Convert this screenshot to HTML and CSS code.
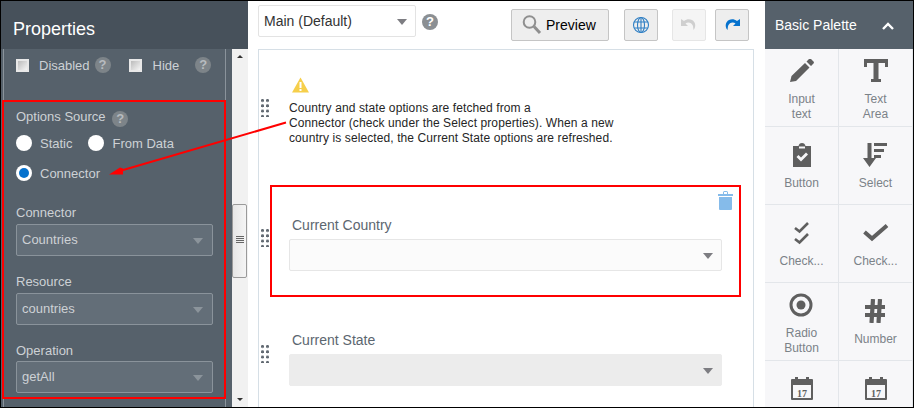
FILE: index.html
```html
<!DOCTYPE html>
<html lang="en">
<head>
<meta charset="utf-8">
<title>Properties</title>
<link rel="stylesheet" href="styles.css">
</head>
<body>
<div class="frame">
  <aside class="props">
    <header class="props-head">Properties</header>
    <div class="props-body">
      <div class="props-form">
        <div class="check-row">
          <span class="checkbox"></span><span class="check-label">Disabled</span><span class="help h-disabled">?</span>
          <span class="checkbox c-hide"></span><span class="check-label">Hide</span><span class="help h-hide">?</span>
        </div>
        <div class="source">
          <div class="field-label with-help">Options Source <span class="help">?</span></div>
          <div class="radio-row"><span class="radio"></span><span class="radio-label">Static</span><span class="radio r2"></span><span class="radio-label">From Data</span></div>
          <div class="radio-row"><span class="radio on"></span><span class="radio-label">Connector</span></div>
        </div>
        <div class="field first-field"><div class="field-label">Connector</div><div class="dark-select">Countries<i class="caret"></i></div></div>
        <div class="field"><div class="field-label">Resource</div><div class="dark-select">countries<i class="caret"></i></div></div>
        <div class="field last-field"><div class="field-label">Operation</div><div class="dark-select">getAll<i class="caret"></i></div></div>
      </div>
      <div class="scrollbar">
        <i class="sb-up"></i>
        <div class="sb-thumb"><svg width="8" height="8" viewBox="0 0 8 8"><path d="M0 .5h8M0 2.500h8M0 4.500h8M0 6.500h8" stroke="#666" stroke-width="1"/></svg></div>
        <i class="sb-down"></i>
      </div>
    </div>
  </aside>

  <main class="center">
    <div class="toolbar">
      <div class="mode-select">Main (Default)<i class="caret"></i></div>
      <span class="help help-top">?</span>
      <button class="btn preview">
        <svg width="22" height="24" viewBox="0 0 22 24"><circle cx="8.500" cy="9" r="5.800" fill="none" stroke="#8f8f8f" stroke-width="2"/><path d="M13 13.500l6 6.500" stroke="#8f8f8f" stroke-width="3"/></svg>
        Preview
      </button>
      <button class="btn icon globe">
        <svg width="18" height="18" viewBox="0 0 18 18" fill="none" stroke="#2f7fc4" stroke-width="1.100"><circle cx="9" cy="9" r="7.500"/><ellipse cx="9" cy="9" rx="3.500" ry="7.500"/><path d="M9 1.500v15M2.200 6h13.600M2.200 12h13.600"/></svg>
      </button>
      <button class="btn icon undo disabled">
        <svg width="16" height="14" viewBox="0 0 16 14"><path d="M0 1v7h7L4.500 5.500C6.500 3.800 10.500 4 12 8l.5 4c3-3.500 2-8-1.500-10C8.500.6 5.500 1 3 3z" fill="#cfcfcf"/></svg>
      </button>
      <button class="btn icon redo">
        <svg width="16" height="14" viewBox="0 0 16 14"><path d="M16 1v7H9l2.500-2.500C9.500 3.800 5.500 4 4 8l-.5 4C.5 8.500 1.500 4 5 2c2.500-1.400 5.500-1 8 1z" fill="#0572ce"/></svg>
      </button>
    </div>
    <div class="canvas">
      <div class="block notice">
        <svg class="warn" width="17" height="16" viewBox="0 0 17 16"><path d="M8.500.5L17 15.500H0z" fill="#f6cf4b"/><path d="M7.500 5h2v6h-2zM7.500 12h2v2h-2z" fill="#fff"/></svg>
        <p>Country and state options are fetched from a<br>Connector (check under the Select properties). When a new<br>country is selected, the Current State options are refreshed.</p>
        <i class="grip"></i>
      </div>
      <div class="block country">
        <div class="form-label">Current Country</div>
        <div class="form-select">&nbsp;<i class="caret"></i></div>
        <i class="grip"></i>
        <svg class="trash" width="15" height="19" viewBox="0 0 15 19"><path d="M0 3h5V1.500A1.500 1.500 0 0 1 6.500 0h2A1.500 1.500 0 0 1 10 1.500V3h5v2H0zM6 1v2h3V1zM1 6h13v12a1 1 0 0 1-1 1H2a1 1 0 0 1-1-1z" fill="#85bbea" fill-rule="evenodd"/></svg>
      </div>
      <div class="block state">
        <div class="form-label">Current State</div>
        <div class="form-select off">&nbsp;<i class="caret"></i></div>
        <i class="grip"></i>
      </div>
    </div>
  </main>

  <aside class="palette">
    <header class="palette-head">Basic Palette
      <svg width="14" height="9" viewBox="0 0 14 9"><path d="M2 8L7 3l5 5" fill="none" stroke="#fff" stroke-width="2.400"/></svg>
    </header>
    <div class="palette-grid">
      <div class="cell"><svg width="26" height="24" viewBox="0 0 26 24"><path d="M1 23l1.500-6L16 4l4.500 4.500L7 22zM17.500 2.500L20 0c1-.6 1.500-.5 2 0l2.500 2.500c.6.600.6 1.200 0 2L22 7z" fill="#5f5f5f"/></svg><span>Input<br>text</span></div>
      <div class="cell"><svg width="26" height="24" viewBox="0 0 26 24"><path d="M1 0h24v8h-3V4h-6.500v16H18v3H8v-3h2.500V4H4v4H1z" fill="#5f5f5f"/></svg><span>Text<br>Area</span></div>
      <div class="cell cell-one"><svg width="26" height="24" viewBox="0 0 26 24"><path d="M4 3h5.500C10 1 11 0 13 0s3 1 3.500 3H22v21H4zM10 3.500v2h6v-2zM7.500 14l2-2 2.500 2.500L17 9.500l2 2-7 7z" fill="#5f5f5f" fill-rule="evenodd"/></svg><span>Button</span></div>
      <div class="cell cell-one"><svg width="26" height="24" viewBox="0 0 26 24"><path d="M4.500 0h4v15H13l-6.500 9L0 15h4.500zM11 0h13v3H11zM11 6h10v3H11zM11 12h7v3h-7z" fill="#5f5f5f"/></svg><span>Select</span></div>
      <div class="cell cell-one"><svg width="26" height="24" viewBox="0 0 26 24"><path d="M6 7l4.500 3.500L19 2M6 18l4.500 3.500L19 13" fill="none" stroke="#5f5f5f" stroke-width="2.600"/></svg><span>Check...</span></div>
      <div class="cell cell-one"><svg width="26" height="24" viewBox="0 0 26 24"><path d="M1.500 11l7.500 6.500L24 4.500" fill="none" stroke="#5f5f5f" stroke-width="4"/></svg><span>Check...</span></div>
      <div class="cell"><svg width="26" height="24" viewBox="0 0 26 24"><circle cx="12" cy="12" r="10" fill="none" stroke="#5f5f5f" stroke-width="3"/><circle cx="12" cy="12" r="4.500" fill="#5f5f5f"/></svg><span>Radio<br>Button</span></div>
      <div class="cell cell-one"><svg width="26" height="24" viewBox="0 0 26 24"><path d="M10 0L8.500 24M17 0l-1.500 24M2 8h20M2 16h20" fill="none" stroke="#5f5f5f" stroke-width="4.200"/></svg><span>Number</span></div>
      <div class="cell cell-cut"><svg width="26" height="24" viewBox="0 0 26 24"><path d="M3 3h3V1h3v2h8V1h3v2h3a1 1 0 0 1 1 1v19a1 1 0 0 1-1 1H3a1 1 0 0 1-1-1V4a1 1 0 0 1 1-1zM4 9v13h18V9z" fill="#5f5f5f" fill-rule="evenodd"/><text x="13" y="20.500" class="cal">17</text></svg></div>
      <div class="cell cell-cut"><svg width="26" height="24" viewBox="0 0 26 24"><path d="M3 3h3V1h3v2h8V1h3v2h3a1 1 0 0 1 1 1v19a1 1 0 0 1-1 1H3a1 1 0 0 1-1-1V4a1 1 0 0 1 1-1zM4 9v13h18V9z" fill="#5f5f5f" fill-rule="evenodd"/><text x="13" y="20.500" class="cal">17</text></svg></div>
    </div>
  </aside>

  <div class="mark mark-left"></div>
  <div class="mark mark-right"></div>
  <svg class="arrow" width="914" height="408" viewBox="0 0 914 408"><path d="M286 122.500L118 171.500" stroke="#f00" stroke-width="2" fill="none"/><path d="M109 174.500l11-7 3 1v6z" fill="#f00"/></svg>
</div>
</body>
</html>
```
FILE: styles.css
```css
* { box-sizing: border-box; }
html, body { margin: 0; padding: 0; }
body { font-family: "Liberation Sans", Arial, sans-serif; background: #fff; }
i { display: block; font-style: normal; }

.frame {
  position: relative;
  display: flex;
  width: 914px;
  height: 408px;
  border: 1px solid #000;
  overflow: hidden;
}

/* left panel */
.props { width: 247px; flex: none; display: flex; flex-direction: column; }
.props-head {
  height: 48px;
  flex: none;
  padding: 17px 0 0 12px;
  background: #47515b;
  color: #fff;
  font-size: 18px;
  line-height: 22px;
}
.props-body { flex: 1; display: flex; min-height: 0; }
.props-form {
  width: 231px;
  flex: none;
  background:
    linear-gradient(#8a939b, #8a939b) 2px 0 / 1px 100% no-repeat,
    linear-gradient(#8a939b, #8a939b) 224px 0 / 1px 100% no-repeat,
    #56616b;
  color: #cdd1d5;
  font-size: 13px;
  padding: 0 0 0 15px;
  overflow: hidden;
}
.check-row { display: flex; align-items: center; height: 18px; margin-top: 7px; }
.checkbox {
  width: 13px;
  height: 13px;
  flex: none;
  background: linear-gradient(135deg, #bbb, #f4f4f4);
  border: 2px solid #e8e8e8;
}
.check-label { margin-left: 10px; }
.c-hide { margin-left: 18px; }
.c-hide + .check-label { margin-left: 11px; }
.help {
  display: inline-block;
  width: 16px;
  height: 16px;
  flex: none;
  border-radius: 50%;
  background: #7d8489;
  color: #b7bbbf;
  font-size: 13px;
  font-weight: 700;
  line-height: 16px;
  text-align: center;
  vertical-align: -2px;
}
.h-disabled { margin-left: 5px; }
.h-hide { margin-left: 16px; }

.source { margin-top: 35px; }
.field-label { line-height: 16px; }
.with-help .help { margin-left: 3px; }
.radio-row { display: flex; align-items: center; height: 16px; margin-top: 8px; }
.radio-row + .radio-row { margin-top: 14px; }
.radio {
  position: relative;
  width: 16px;
  height: 16px;
  flex: none;
  background: #fff;
  border-radius: 50%;
}
.radio.on::after {
  content: "";
  position: absolute;
  left: 3px;
  top: 3px;
  width: 10px;
  height: 10px;
  border-radius: 50%;
  background: #0572ce;
}
.radio-label { margin-left: 8px; }
.r2 { margin-left: 15px; }
.r2 + .radio-label { margin-left: 9px; }

.first-field { margin-top: 24px; }
.field + .field { margin-top: 18px; }
.field + .last-field { margin-top: 18px; }
.dark-select {
  position: relative;
  width: 197px;
  height: 32px;
  margin-top: 3px;
  padding-left: 5px;
  background: #636e78;
  border: 1px solid #8a939b;
  border-radius: 2px;
  line-height: 30px;
  font-size: 13px;
}
.last-field .dark-select { margin-top: 2px; }
.caret {
  position: absolute;
  right: 8px;
  top: 13px;
  width: 0;
  height: 0;
  border-left: 5px solid transparent;
  border-right: 5px solid transparent;
  border-top: 6px solid #7d7d82;
}
.dark-select .caret { border-top-color: #8b949b; right: 9px; }

.scrollbar {
  position: relative;
  width: 16px;
  flex: none;
  background: #f1f1f1;
}
.sb-up, .sb-down {
  position: absolute;
  left: 5px;
  width: 0;
  height: 0;
  border-left: 3px solid transparent;
  border-right: 3px solid transparent;
}
.sb-up { top: 6px; border-bottom: 3px solid #333; }
.sb-down { bottom: 6px; border-top: 3px solid #333; }
.sb-thumb {
  position: absolute;
  top: 155px;
  left: 0;
  width: 15px;
  height: 74px;
  display: flex;
  align-items: center;
  justify-content: center;
  background: linear-gradient(90deg, #e6e6e6, #f5f5f5);
  border: 1px solid #9a9a9a;
  border-radius: 2px;
  padding-bottom: 3px;
}

/* center */
.center { width: 517px; flex: none; display: flex; flex-direction: column; padding-left: 10px; }
.toolbar { height: 48px; flex: none; display: flex; align-items: flex-start; position: relative; }
.mode-select {
  position: relative;
  width: 158px;
  height: 32px;
  margin-top: 4px;
  padding-left: 5px;
  background: #fff;
  border: 1px solid #e3e3e3;
  border-radius: 2px;
  color: #333;
  font-size: 14px;
  line-height: 30px;
}
.help-top { margin: 13px 0 0 6px; background: #8b8f93; color: #fff; }
.btn {
  height: 32px;
  margin-top: 8px;
  padding: 0;
  display: flex;
  align-items: center;
  justify-content: center;
  background: #eeeeee;
  border: 1px solid #c5c5c5;
  border-radius: 2px;
  font-family: inherit;
  font-size: 14px;
  color: #000;
}
.preview { width: 98px; margin-left: 73px; gap: 3px; justify-content: flex-start; padding-left: 9px; }
.btn.icon { width: 34px; }
.globe { margin-left: 15px; }
.undo { margin-left: 14px; }
.redo { margin-left: 9px; }
.disabled { background: #f5f5f5; border-color: #e6e6e6; }

.canvas {
  width: 496px;
  flex: 1;
  border: 1px solid #d6dfe6;
  border-bottom: 0;
  background: #fff;
  position: relative;
}
.block { position: relative; }
.notice { height: 135px; padding: 27px 0 0 30px; }
.warn { display: block; margin-left: 3px; }
.notice p {
  margin: 8px 0 0;
  font-size: 12px;
  line-height: 15px;
  letter-spacing: .1px;
  color: #252525;
}
.grip {
  position: absolute;
  left: 2px;
  top: 49px;
  width: 8px;
  height: 18px;
  background: radial-gradient(circle at 1.500px 1.500px, #626a72 1.300px, transparent 1.700px) 0 0 / 5px 5.300px;
}
.country { height: 116px; padding: 32px 0 0 30px; }
.country .grip { top: 44px; }
.form-label { margin-left: 3px; font-size: 14px; line-height: 16px; color: #5c6670; }
.form-select {
  position: relative;
  width: 433px;
  height: 32px;
  margin-top: 6px;
  background: #fbfbfb;
  border: 1px solid #e6e6e6;
  border-radius: 2px;
  line-height: 30px;
  font-size: 14px;
}
.form-select.off { background: #ececec; border-color: #ececec; }
.trash { position: absolute; left: 459px; top: 6px; }
.state { padding: 31px 0 0 30px; }
.state .grip { top: 44px; }

/* palette */
.palette { margin-left: 0; flex: 1; min-width: 0; display: flex; flex-direction: column; }
.palette-head {
  height: 48px;
  flex: none;
  display: flex;
  align-items: center;
  justify-content: space-between;
  padding: 0 18px 0 10px;
  background: #56616b;
  color: #fff;
  font-size: 14px;
}
.palette-grid {
  display: grid;
  grid-template-columns: 74px 74px;
  grid-auto-rows: 78px;
  background: #f7f7f9;
}
.cell {
  display: flex;
  flex-direction: column;
  align-items: center;
  padding-top: 10px;
  border-right: 1px solid #e3e6ea;
  border-bottom: 1px solid #e3e6ea;
  text-align: center;
  font-size: 12px;
  line-height: 15px;
  color: #7b8288;
}
.cell svg { display: block; margin-bottom: 9px; flex: none; }
.cell-one { padding-top: 16px; }
.cell-cut { padding-top: 15px; }
.cal { font-family: "Liberation Serif", serif; font-size: 10px; font-weight: 700; text-anchor: middle; fill: #5f5f5f; }

/* review annotations drawn over the screen */
.mark { position: absolute; border: 2px solid #f00; pointer-events: none; }
.mark-left { left: 1px; top: 99px; width: 224px; height: 299px; }
.mark-right { left: 269px; top: 184px; width: 471px; height: 112px; }
.arrow { position: absolute; left: -1px; top: -1px; pointer-events: none; }
```
